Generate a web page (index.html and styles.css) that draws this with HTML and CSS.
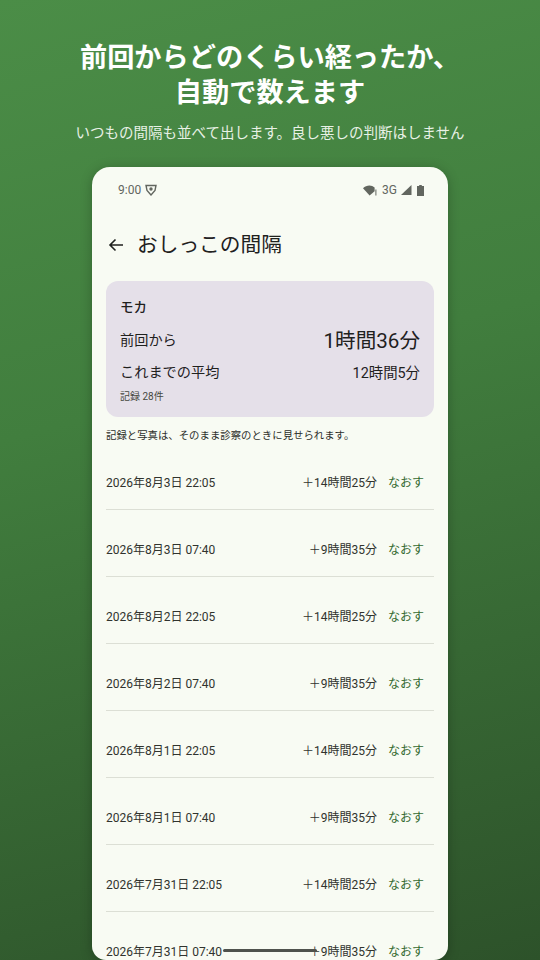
FILE: index.html
```html
<!DOCTYPE html>
<html lang="ja">
<head>
<meta charset="utf-8">
<title>おしっこの間隔</title>
<link rel="stylesheet" href="styles.css">
</head>
<body>
<main class="stage">
  <header class="promo">
    <h1>前回からどのくらい経ったか、<br>自動で数えます</h1>
    <p>いつもの間隔も並べて出します。良し悪しの判断はしません</p>
  </header>
  <section class="phone">
    <div class="status">
      <div class="status-left">
        <span>9:00</span>
        <svg class="ic-shield" viewBox="0 0 12 12"><path d="M1 1.500h10L10 6.500 6 11 2 6.500z" fill="none" stroke="#62665f" stroke-width="1.400"/><circle cx="6" cy="5" r="1.700" fill="#62665f"/></svg>
      </div>
      <div class="status-right">
        <svg class="ic-wifi" viewBox="0 0 14 11"><path d="M0 3.200C3.400-.4 8.600-.4 11.600 2.400V6.200L6.600 10.600z" fill="#62665f"/><rect x="12.400" y="4.500" width="1" height="6" fill="#62665f"/></svg>
        <span>3G</span>
        <svg class="ic-signal" viewBox="0 0 11 10"><path d="M0 10 10.500 0v10z" fill="#62665f"/></svg>
        <svg class="ic-batt" viewBox="0 0 7 11"><path d="M2.200 0h2.600v1H7v10H0V1h2.200z" fill="#62665f"/></svg>
      </div>
    </div>
    <div class="appbar">
      <svg class="ic-back" viewBox="0 0 16 14"><path d="M15 7H2M7.500 1.500 2 7l5.500 5.500" fill="none" stroke="#1f211e" stroke-width="1.600"/></svg>
      <h2>おしっこの間隔</h2>
    </div>
    <div class="summary">
      <div class="pet">モカ</div>
      <div class="sum-row first"><span>前回から</span><span class="big">1時間36分</span></div>
      <div class="sum-row"><span>これまでの平均</span><span class="mid">12時間5分</span></div>
      <div class="count">記録 28件</div>
    </div>
    <p class="note">記録と写真は、そのまま診察のときに見せられます。</p>
    <ul class="list">
      <li><span class="date">2026年8月3日 22:05</span><span class="gap">＋14時間25分</span><span class="fix">なおす</span></li>
      <li><span class="date">2026年8月3日 07:40</span><span class="gap">＋9時間35分</span><span class="fix">なおす</span></li>
      <li><span class="date">2026年8月2日 22:05</span><span class="gap">＋14時間25分</span><span class="fix">なおす</span></li>
      <li><span class="date">2026年8月2日 07:40</span><span class="gap">＋9時間35分</span><span class="fix">なおす</span></li>
      <li><span class="date">2026年8月1日 22:05</span><span class="gap">＋14時間25分</span><span class="fix">なおす</span></li>
      <li><span class="date">2026年8月1日 07:40</span><span class="gap">＋9時間35分</span><span class="fix">なおす</span></li>
      <li><span class="date">2026年7月31日 22:05</span><span class="gap">＋14時間25分</span><span class="fix">なおす</span></li>
      <li><span class="date">2026年7月31日 07:40</span><span class="gap">＋9時間35分</span><span class="fix">なおす</span></li>
    </ul>
    <div class="home-bar"></div>
  </section>
</main>
</body>
</html>
```
FILE: styles.css
```css
* { box-sizing: border-box; }
html, body { margin: 0; padding: 0; }
body {
  width: 540px;
  height: 960px;
  overflow: hidden;
  font-family: Roboto, "Noto Sans CJK JP", sans-serif;
}
.stage {
  width: 540px;
  height: 960px;
  display: flex;
  flex-direction: column;
  align-items: center;
  overflow: hidden;
  background: linear-gradient(165deg, #4b8d47 0%, #417e3e 40%, #2d522a 100%);
}
.promo { text-align: center; color: #fff; padding-top: 41px; height: 167px; flex: none; }
.promo h1 { margin: 0; font-size: 27.2px; line-height: 35px; font-weight: 700; white-space: nowrap; }
.promo p { margin: 13px 0 0; font-size: 14.5px; line-height: 20px; color: #e8f1e6; white-space: nowrap; }
.phone {
  position: relative;
  width: 356px;
  height: 793px;
  flex: none;
  background: #f8fbf3;
  border-radius: 18px 18px 14px 14px;
  box-shadow: 0 2px 12px rgba(0,0,0,.25);
  overflow: hidden;
  padding: 0 14px;
}
.status {
  height: 46px;
  display: flex;
  justify-content: space-between;
  align-items: center;
  padding: 0 10px 0 12px;
  font-size: 12px;
  color: #62665f;
}
.status-left, .status-right { display: flex; align-items: center; }
.status-left { gap: 4px; }
.status-right { gap: 3px; }
.ic-shield { width: 12px; height: 12px; }
.ic-wifi { width: 14px; height: 11px; margin-right: 2px; }
.ic-signal { width: 11px; height: 10px; margin-left: 1px; }
.ic-batt { width: 7px; height: 11px; margin-left: 2px; }
.appbar { height: 32px; margin-top: 16px; display: flex; align-items: center; gap: 13px; padding-left: 2px; }
.ic-back { width: 16px; height: 14px; flex: none; }
.appbar h2 { margin: 0; font-size: 20.7px; line-height: 32px; font-weight: 400; color: #1f211e; }
.summary {
  margin-top: 20px;
  height: 136px;
  background: #e5e0e9;
  border-radius: 12px;
  padding: 16px 14px 0;
  color: #1f211e;
}
.pet { font-size: 13.5px; line-height: 20px; font-weight: 500; }
.sum-row { display: flex; justify-content: space-between; align-items: center; font-size: 14.2px; height: 30px; }
.sum-row.first { margin-top: 5px; height: 34px; }
.big { font-size: 20.6px; }
.mid { font-size: 14.4px; }
.count { font-size: 10px; line-height: 14px; margin-top: 4px; color: #45483f; }
.note { margin: 12px 0 0; font-size: 10.4px; line-height: 14px; color: #2c2e2a; white-space: nowrap; }
.list { list-style: none; margin: 0 0 0; padding: 0; }
.list li {
  height: 67px;
  display: flex;
  align-items: center;
  font-size: 12px;
  color: #30332e;
  border-bottom: 1.5px solid #dcdfd5;
  padding: 11px 11px 0 0;
}
.date { flex: 1; }
.gap { font-size: 12px; }
.fix { margin-left: 11px; color: #33692f; width: 35px; white-space: nowrap; }
.home-bar {
  position: absolute;
  left: 131px;
  bottom: 8px;
  width: 94px;
  height: 3px;
  border-radius: 2px;
  background: #4f524d;
}
```
